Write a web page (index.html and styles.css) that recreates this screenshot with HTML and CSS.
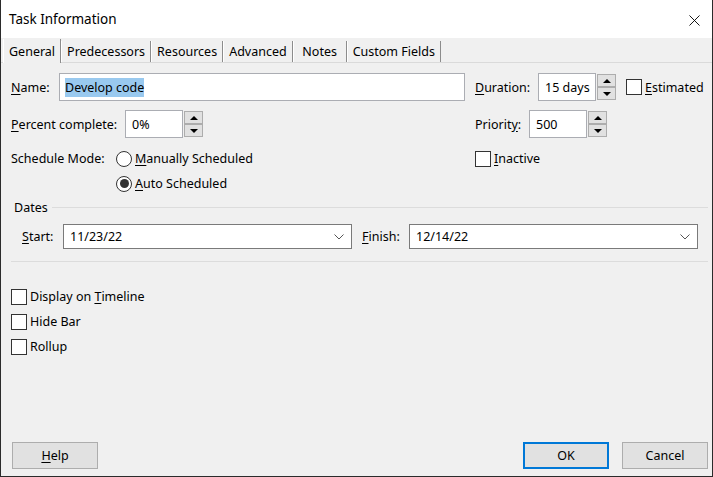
FILE: index.html
```html
<!DOCTYPE html>
<html lang="en">
<head>
  <meta charset="UTF-8">
  <title>Task Information</title>
  <link rel="stylesheet" href="styles.css">
</head>
<body>
  <div class="window">
    <div class="titlebar">
      <span class="title">Task Information</span>
      <svg class="close" width="12" height="12" viewBox="0 0 12 12">
        <path d="M0.5 0.5 L11.5 11.5 M11.5 0.5 L0.5 11.5" stroke="#000" stroke-width="1" fill="none"/>
      </svg>
    </div>
    <div class="tabs">
      <div class="tab active">General</div>
      <div class="tab">Predecessors</div>
      <div class="tab">Resources</div>
      <div class="tab">Advanced</div>
      <div class="tab">Notes</div>
      <div class="tab">Custom Fields</div>
    </div>
    <div class="panel">
      <div class="row">
        <div class="left">
          <span class="lbl name-lbl"><u>N</u>ame:</span>
          <div class="field name-field"><span class="sel">Develop code</span></div>
        </div>
        <span class="lbl dur-lbl"><u>D</u>uration:</span>
        <div class="field num-field">15 days</div>
        <div class="spin"><span class="spin-btn"><i class="up"></i></span><span class="spin-btn"><i class="down"></i></span></div>
        <span class="check est"><span class="box"></span><span><u>E</u>stimated</span></span>
      </div>
      <div class="row row2">
        <div class="left">
          <span class="lbl pct-lbl"><u>P</u>ercent complete:</span>
          <div class="field num-field">0%</div>
          <div class="spin"><span class="spin-btn"><i class="up"></i></span><span class="spin-btn"><i class="down"></i></span></div>
        </div>
        <span class="lbl pri-lbl">Priorit<u>y</u>:</span>
        <div class="field num-field">500</div>
        <div class="spin"><span class="spin-btn"><i class="up"></i></span><span class="spin-btn"><i class="down"></i></span></div>
      </div>
      <div class="row row3">
        <div class="left">
          <span class="lbl mode-lbl">Schedule Mode:</span>
          <span class="check"><span class="radio"></span><span><u>M</u>anually Scheduled</span></span>
        </div>
        <span class="check"><span class="box"></span><span><u>I</u>nactive</span></span>
      </div>
      <div class="row row4">
        <div class="left indent">
          <span class="check"><span class="radio on"></span><span><u>A</u>uto Scheduled</span></span>
        </div>
      </div>

      <div class="group-title">Dates</div>
      <div class="date-row">
        <span class="lbl start-lbl"><u>S</u>tart:</span>
        <div class="combo">
          <span>11/23/22</span>
          <svg width="10" height="6" viewBox="0 0 10 6"><path d="M0.5 0.5 L5 5 L9.5 0.5" stroke="#555" fill="none"/></svg>
        </div>
        <span class="lbl finish-lbl"><u>F</u>inish:</span>
        <div class="combo">
          <span>12/14/22</span>
          <svg width="10" height="6" viewBox="0 0 10 6"><path d="M0.5 0.5 L5 5 L9.5 0.5" stroke="#555" fill="none"/></svg>
        </div>
      </div>
      <div class="sep"></div>

      <div class="options">
        <span class="check"><span class="box"></span><span>Display on <u>T</u>imeline</span></span>
        <span class="check"><span class="box"></span><span>Hide Bar</span></span>
        <span class="check"><span class="box"></span><span>Rollup</span></span>
      </div>

      <div class="footer">
        <button class="btn"><u>H</u>elp</button>
        <button class="btn primary">OK</button>
        <button class="btn">Cancel</button>
      </div>
    </div>
  </div>
</body>
</html>
```
FILE: styles.css
```css
* {
  box-sizing: border-box;
  margin: 0;
  padding: 0;
}
body {
  font-family: "Noto Sans", sans-serif;
  font-size: 12.5px;
  color: #000;
  background: #f0f0f0;
}
u {
  text-underline-offset: 2px;
}
.window {
  width: 713px;
  height: 477px;
  border: 1px solid #2b2b2b;
  border-top: none;
  background: #f0f0f0;
  display: flex;
  flex-direction: column;
}
.titlebar {
  height: 38px;
  background: #fff;
  display: flex;
  align-items: center;
  justify-content: space-between;
  padding: 0 12px 0 8px;
}
.title {
  font-size: 13.5px;
}
.close {
  width: 11px;
  height: 11px;
  margin-top: 2px;
}
.tabs {
  height: 25px;
  display: flex;
  align-items: flex-end;
  padding-left: 2px;
  border-bottom: 1px solid #dadada;
}
.tab {
  height: 21px;
  min-width: 54px;
  padding: 0 5px;
  display: flex;
  align-items: center;
  justify-content: center;
  border-left: 1px solid #fff;
  border-right: 1px solid #8c8c8c;
  white-space: nowrap;
}
.tab.active {
  height: 24px;
  margin-bottom: -1px;
  background: #f0f0f0;
}
.panel {
  flex: 1;
  display: flex;
  flex-direction: column;
  padding: 10px 4px 7px 10px;
}
.row {
  display: flex;
  align-items: center;
  height: 28px;
}
.row2 {
  margin-top: 9px;
}
.row3 {
  margin-top: 8px;
  height: 25px;
}
.row4 {
  height: 25px;
}
.left {
  width: 464px;
  flex-shrink: 0;
  display: flex;
  align-items: center;
}
.left.indent {
  padding-left: 105px;
}
.lbl {
  flex-shrink: 0;
  white-space: nowrap;
}
.name-lbl { width: 48px; }
.dur-lbl { width: 63px; }
.pct-lbl { width: 114px; }
.pri-lbl { width: 54px; }
.mode-lbl { width: 105px; }
.start-lbl { width: 41px; }
.finish-lbl { width: 47px; margin-left: 10px; }
.field {
  height: 28px;
  background: #fff;
  border: 1px solid #abadb3;
  display: flex;
  align-items: center;
  padding-left: 5px;
}
.name-field {
  width: 406px;
}
.sel {
  background: #99c9ef;
  padding: 1px 0;
}
.num-field {
  width: 58px;
  padding-left: 6px;
}
.spin {
  width: 19px;
  margin-left: 1px;
  display: flex;
  flex-direction: column;
}
.spin-btn {
  height: 13px;
  background: #e1e1e1;
  border: 1px solid #adadad;
  display: flex;
  align-items: center;
  justify-content: center;
}
.up, .down {
  width: 0;
  height: 0;
  border-left: 4px solid transparent;
  border-right: 4px solid transparent;
}
.up {
  border-bottom: 4px solid #000;
}
.down {
  border-top: 4px solid #000;
}
.check {
  display: flex;
  align-items: center;
  gap: 3px;
  white-space: nowrap;
}
.est {
  margin-left: 10px;
}
.box {
  width: 16px;
  height: 16px;
  background: #fff;
  border: 1px solid #333;
}
.radio {
  width: 16px;
  height: 16px;
  border-radius: 50%;
  background: #fff;
  border: 1px solid #333;
  display: flex;
  align-items: center;
  justify-content: center;
}
.radio.on::after {
  content: "";
  width: 9px;
  height: 9px;
  border-radius: 50%;
  background: #333;
}
.group-title {
  margin-top: 3px;
  height: 16px;
  display: flex;
  align-items: center;
  padding-left: 3px;
}
.group-title::after {
  content: "";
  flex: 1;
  border-top: 1px solid #dcdcdc;
  margin-left: 4px;
}
.date-row {
  margin-top: 9px;
  height: 25px;
  display: flex;
  align-items: center;
  padding-left: 11px;
}
.combo {
  width: 289px;
  height: 25px;
  background: #fff;
  border: 1px solid #7a7a7a;
  display: flex;
  align-items: center;
  justify-content: space-between;
  padding: 0 7px 0 6px;
}
.sep {
  margin-top: 12px;
  border-top: 1px solid #dcdcdc;
}
.options {
  margin-top: 22px;
  display: flex;
  flex-direction: column;
}
.options .check {
  height: 25px;
}
.footer {
  margin-top: auto;
  display: flex;
  padding-left: 1px;
}
.btn {
  width: 86px;
  height: 27px;
  font-family: inherit;
  font-size: 12.5px;
  color: #000;
  background: #e1e1e1;
  border: 1px solid #adadad;
}
.btn.primary {
  margin-left: auto;
  border: 2px solid #0078d7;
}
.btn + .btn.primary + .btn {
  margin-left: 13px;
}
```
